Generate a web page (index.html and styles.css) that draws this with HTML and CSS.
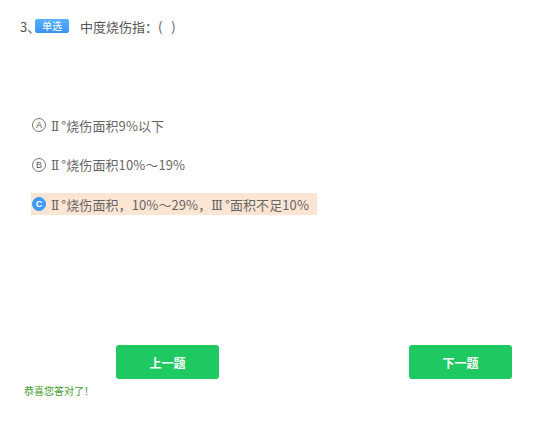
FILE: index.html
```html
<!DOCTYPE html>
<html lang="zh">
<head>
<meta charset="utf-8">
<link rel="stylesheet" href="styles.css">
</head>
<body>
<div class="page">
  <div class="question">
    <span class="num">3、</span><span class="badge">单选</span><span class="stem">中度烧伤指：(&nbsp;&nbsp;&nbsp;)</span>
  </div>
  <div class="options">
    <div class="option"><span class="mark">A</span><span class="text"><span class="roman">Ⅱ</span>°烧伤面积9%以下</span></div>
    <div class="option"><span class="mark">B</span><span class="text"><span class="roman">Ⅱ</span>°烧伤面积10%～19%</span></div>
    <div class="option selected"><span class="mark">C</span><span class="text"><span class="roman">Ⅱ</span>°烧伤面积，10%～29%，<span class="roman">Ⅲ</span>°面积不足10%</span></div>
  </div>
  <div class="actions">
    <button class="btn">上一题</button>
    <button class="btn">下一题</button>
  </div>
  <div class="result">恭喜您答对了！</div>
</div>
</body>
</html>
```
FILE: styles.css
```css
html, body {
  margin: 0;
  padding: 0;
  background: #fff;
}
body {
  font-family: "Noto Sans CJK SC", "Noto Sans", sans-serif;
  color: #555;
}
.page {
  padding-top: 16px;
}
.question {
  display: flex;
  align-items: center;
  height: 20px;
  padding-left: 20px;
  font-size: 13px;
  color: #555;
}
.num {
  width: 15px;
}
.badge {
  display: inline-flex;
  align-items: center;
  justify-content: center;
  width: 34px;
  height: 14px;
  border-radius: 2px;
  background: linear-gradient(#5bb2ff, #3993f3);
  color: #fff;
  font-size: 10px;
  line-height: 14px;
  margin-right: 11px;
}
.options {
  margin-top: 78px;
  margin-left: 31px;
  display: flex;
  flex-direction: column;
  align-items: flex-start;
  gap: 17.5px;
}
.option {
  display: flex;
  align-items: center;
  height: 22px;
  padding: 0 8px 0 1px;
  font-size: 13px;
  color: #666;
}
.text {
  letter-spacing: 0.1px;
}
.roman {
  font-family: "DejaVu Serif", serif;
  font-size: 12px;
  margin-right: 2px;
}
.mark {
  box-sizing: border-box;
  width: 14px;
  height: 14px;
  border: 1px solid #777;
  border-radius: 50%;
  font-size: 9px;
  line-height: 12px;
  text-align: center;
  color: #555;
  margin-right: 5px;
  font-family: "Liberation Sans", sans-serif;
}
.option.selected {
  background: #fde5d3;
}
.option.selected .mark {
  background: #3d9bf5;
  border-color: #3d9bf5;
  color: #fff;
  font-weight: bold;
}
.actions {
  margin-top: 130px;
  padding-left: 116px;
  display: flex;
  gap: 190px;
}
.btn {
  width: 103px;
  height: 34px;
  border: none;
  border-radius: 3px;
  background: #1fc962;
  color: #fff;
  font-family: "Noto Sans CJK SC", sans-serif;
  font-size: 12px;
  font-weight: bold;
  padding: 0;
}
.result {
  margin-top: 5px;
  padding-left: 24px;
  font-size: 10px;
  line-height: 14px;
  color: #3d9a2a;
}
```
